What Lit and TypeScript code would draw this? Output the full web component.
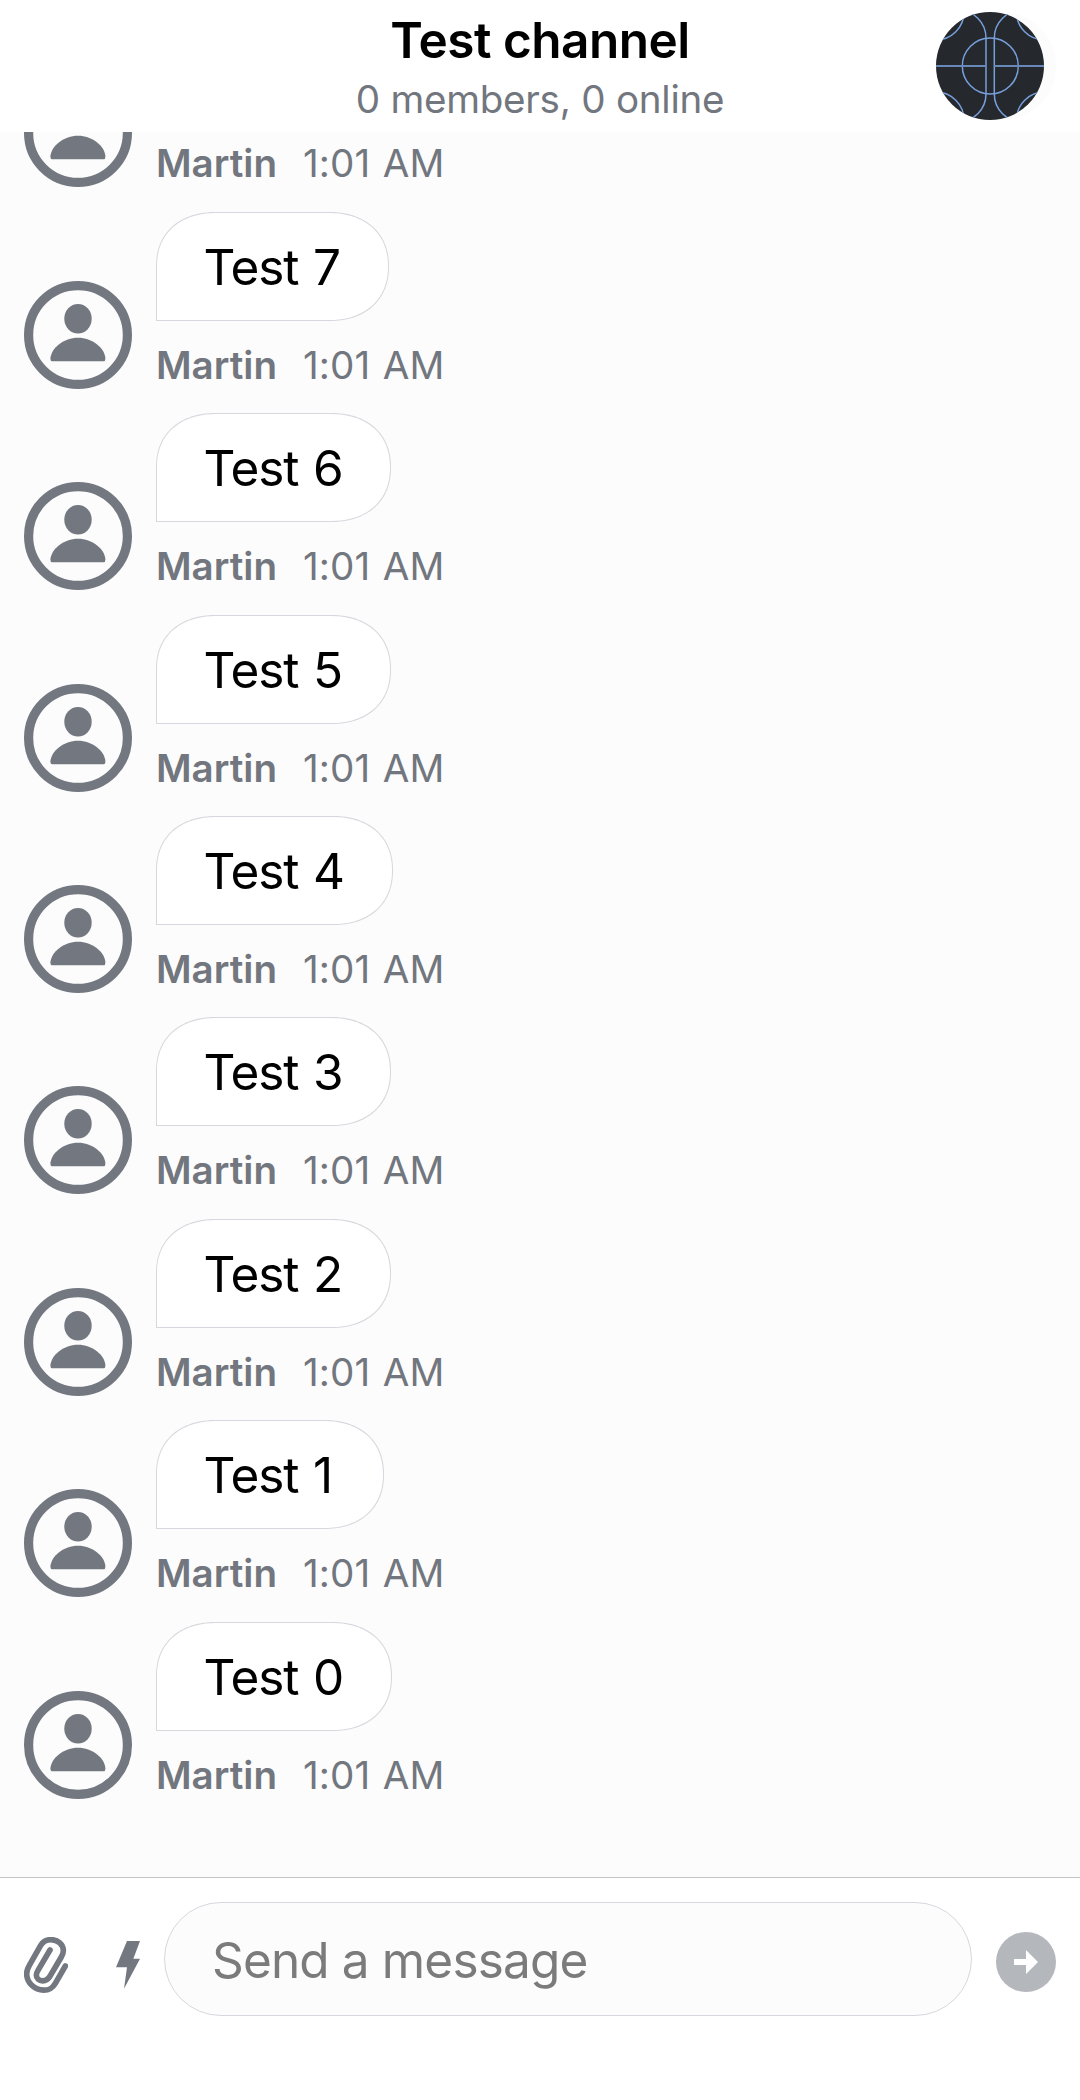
import { LitElement, html, css, nothing } from "lit";
import { customElement, property } from "lit/decorators.js";

interface Message {
  text?: string;
  author: string;
  time: string;
}

const author = "Martin";
const time = "1:01 AM";

// The oldest entry is scrolled up so that only its footer row remains in view.
const messages: Message[] = [
  { author, time },
  ...[7, 6, 5, 4, 3, 2, 1, 0].map((n) => ({ text: `Test ${n}`, author, time })),
];

@customElement("chat-header")
class ChatHeader extends LitElement {
  @property() name = "";
  @property() status = "";

  static styles = css`
    :host {
      display: grid;
      grid-template-columns: 144px 1fr 144px;
      height: 132px;
      flex: none;
      background: #fff;
      color: #000;
    }
    .titles {
      grid-column: 2;
      display: flex;
      flex-direction: column;
      align-items: center;
      white-space: nowrap;
    }
    .name {
      margin-top: 10px;
      line-height: 60px;
      font-size: 49.5px;
      font-weight: 600;
      letter-spacing: -0.5px;
    }
    .status {
      margin-top: 5px;
      line-height: 48px;
      font-size: 38.6px;
      letter-spacing: -0.25px;
      color: #72767e;
    }
    .picture {
      margin-top: 12px;
      width: 120px;
      height: 108px;
    }
  `;

  render() {
    return html`
      <div class="titles">
        <div class="name">${this.name}</div>
        <div class="status">${this.status}</div>
      </div>
      <svg class="picture" viewBox="0 0 120 108">
        <clipPath id="disc"><circle cx="54" cy="54" r="54" /></clipPath>
        <circle cx="66" cy="54" r="54" fill="#fcfcfc" />
        <circle cx="54" cy="54" r="54" fill="#25292d" />
        <g clip-path="url(#disc)" fill="none" stroke="#779fdc" stroke-width="1.5">
          <circle cx="54.3" cy="54" r="28" />
          <circle cx="0" cy="0" r="28" />
          <circle cx="108.5" cy="0" r="28" />
          <circle cx="0" cy="108" r="28" />
          <circle cx="108.5" cy="108" r="28" />
          <path d="M22 -2A28 28 0 0 1 50 26V82A28 28 0 0 1 22 110" />
          <path d="M86.3 -2A28 28 0 0 0 58.3 26V82A28 28 0 0 0 86.3 110" />
          <path d="M0 54H50M58.3 54H108" stroke="#6788b8" stroke-width="2" />
        </g>
      </svg>
    `;
  }
}

@customElement("chat-message")
class ChatMessage extends LitElement {
  @property() text?: string;
  @property() author = "";
  @property() time = "";

  static styles = css`
    :host {
      display: flex;
      align-items: flex-end;
      gap: 24px;
      height: 177px;
      flex: none;
    }
    .avatar {
      width: 108px;
      height: 108px;
      flex: none;
      color: #727780;
    }
    .body {
      display: flex;
      flex-direction: column;
      justify-content: space-between;
      align-items: flex-start;
      height: 177px;
      white-space: nowrap;
    }
    .bubble {
      box-sizing: border-box;
      height: 109px;
      min-width: 227.5px;
      padding: 0 48px 0 46.6px;
      border: 1px solid #d6d8dd;
      border-radius: 60px 60px 60px 0 / 54px 54px 54px 0;
      corner-shape: superellipse(1.14);
      background: #fff;
      color: #000;
      font-size: 49.5px;
      line-height: 109px;
      letter-spacing: -1.1px;
      word-spacing: 1.6px;
    }
    .meta {
      display: flex;
      gap: 26px;
      margin: auto 0 0;
      color: #72767e;
      font-size: 38.6px;
      line-height: 48px;
    }
    .author {
      font-weight: 600;
    }
    .time {
      letter-spacing: 0.1px;
      word-spacing: 1.6px;
    }
  `;

  render() {
    return html`
      <svg class="avatar" viewBox="0 0 108 108">
        <circle cx="54" cy="54" r="49.4" fill="none" stroke="currentColor" stroke-width="9.2" />
        <ellipse cx="54" cy="37.7" rx="13.7" ry="14.8" fill="currentColor" />
        <path
          d="M26.4 77.5C27 67 40 56.7 54 56.7S81 67 81.4 77.5Q81.4 80.3 79.6 80.3H28.2Q26.4 80.3 26.4 77.5Z"
          fill="currentColor"
        />
      </svg>
      <div class="body">
        ${this.text ? html`<div class="bubble">${this.text}</div>` : nothing}
        <div class="meta">
          <span class="author">${this.author}</span>
          <span class="time">${this.time}</span>
        </div>
      </div>
    `;
  }
}

@customElement("chat-composer")
class ChatComposer extends LitElement {
  static styles = css`
    :host {
      box-sizing: border-box;
      display: flex;
      align-items: flex-start;
      height: 223px;
      flex: none;
      padding: 24px 24px 0;
      border-top: 1px solid #c3c4c6;
      background: #fff;
      color: #727780;
    }
    svg {
      flex: none;
    }
    .clip {
      width: 44px;
      height: 56px;
      margin-top: 35px;
    }
    .bolt {
      width: 24px;
      height: 48px;
      margin: 39px 24px 0 48px;
    }
    .field {
      box-sizing: border-box;
      flex: 1;
      height: 114px;
      padding: 0 48px 0 47px;
      border: 1px solid #d6d8dd;
      border-radius: 57px;
      background: #fcfcfc;
      color: #7b7b7b;
      font-size: 49.5px;
      line-height: 114px;
      letter-spacing: -0.85px;
      white-space: nowrap;
    }
    .send {
      width: 60px;
      height: 60px;
      margin: 30px 0 0 24px;
    }
  `;

  render() {
    return html`
      <svg class="clip" viewBox="72 231 132 168">
        <path
          d="M196 318L166 370C156 387 146 390.5 131 390.5C104 390.5 80 368 80 341C80 330 84 323 88 316L122 256C129 244 138 239 153 239C174 239 190 254 190 272C190 279 188 284 184 291L151 347C145 358 138 362.5 128 362.5C117 362.5 109 355 109 345C109 340 111 336 114 331L150 270"
          fill="none"
          stroke="currentColor"
          stroke-width="17"
          stroke-linecap="round"
        />
      </svg>
      <svg class="bolt" viewBox="348 243 72 144">
        <path d="M381 243H420L400 296H420L372 386L381 322H348Z" fill="currentColor" />
      </svg>
      <div class="field">Send a message</div>
      <svg class="send" viewBox="0 0 60 60">
        <circle cx="30" cy="30" r="30" fill="#b4b7bb" />
        <path d="M18 27H30V18L42 30L30 42V33H18Z" fill="#fff" />
      </svg>
    `;
  }
}

@customElement("app-root")
class AppRoot extends LitElement {
  static styles = css`
    :host {
      display: flex;
      flex-direction: column;
      width: 1080px;
      height: 2100px;
      overflow: hidden;
      background: #fcfcfc;
      font-family: Inter, "Liberation Sans", sans-serif;
    }
    .list {
      box-sizing: border-box;
      display: flex;
      flex-direction: column;
      justify-content: flex-end;
      gap: 24.43px;
      flex: 1;
      min-height: 0;
      padding: 0 24px 78.28px;
      overflow: hidden;
    }
  `;

  render() {
    return html`
      <chat-header name="Test channel" status="0 members, 0 online"></chat-header>
      <div class="list">
        ${messages.map(
          (m) => html`<chat-message .text=${m.text} .author=${m.author} .time=${m.time}></chat-message>`,
        )}
      </div>
      <chat-composer></chat-composer>
    `;
  }
}
